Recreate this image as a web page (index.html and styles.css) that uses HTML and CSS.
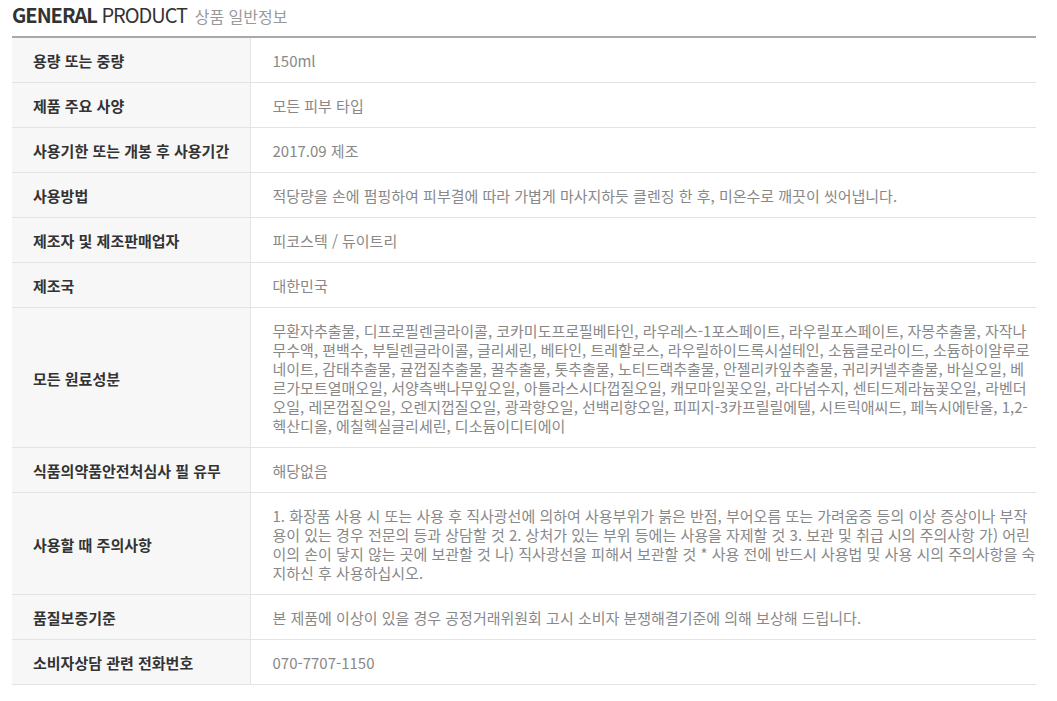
FILE: index.html
```html
<!DOCTYPE html>
<html lang="ko">

<head>
    <meta charset="UTF-8">
    <title>상품 일반정보</title>
    <link rel="stylesheet" href="styles.css">
</head>

<body>
    <div class="info">
        <h3 class="info-title">
            <b>GENERAL</b> PRODUCT <span>상품 일반정보</span>
        </h3>
        <table class="info-table">
            <colgroup>
                <col class="col-label">
                <col>
            </colgroup>
            <tr>
                <th>용량 또는 중량</th>
                <td>150ml</td>
            </tr>
            <tr>
                <th>제품 주요 사양</th>
                <td>모든 피부 타입</td>
            </tr>
            <tr>
                <th>사용기한 또는 개봉 후 사용기간</th>
                <td>2017.09 제조</td>
            </tr>
            <tr>
                <th>사용방법</th>
                <td>적당량을 손에 펌핑하여 피부결에 따라 가볍게 마사지하듯 클렌징 한 후, 미온수로 깨끗이 씻어냅니다.</td>
            </tr>
            <tr>
                <th>제조자 및 제조판매업자</th>
                <td>피코스텍 / 듀이트리</td>
            </tr>
            <tr>
                <th>제조국</th>
                <td>대한민국</td>
            </tr>
            <tr>
                <th>모든 원료성분</th>
                <td>무환자추출물, 디프로필렌글라이콜, 코카미도프로필베타인, 라우레스-1포스페이트, 라우릴포스페이트, 자몽추출물, 자작나무수액, 편백수, 부틸렌글라이콜, 글리세린, 베타인, 트레할로스, 라우릴하이드록시설테인, 소듐클로라이드, 소듐하이알루로네이트, 감태추출물, 귤껍질추출물, 꿀추출물, 톳추출물, 노티드랙추출물, 안젤리카잎추출물, 귀리커넬추출물, 바실오일, 베르가모트열매오일, 서양측백나무잎오일, 아틀라스시다껍질오일, 캐모마일꽃오일, 라다넘수지, 센티드제라늄꽃오일, 라벤더오일, 레몬껍질오일, 오렌지껍질오일, 광곽향오일, 선백리향오일, 피피지-3카프릴릴에텔, 시트릭애씨드, 페녹시에탄올, 1,2-헥산디올, 에칠헥실글리세린, 디소듐이디티에이</td>
            </tr>
            <tr>
                <th>식품의약품안전처심사 필 유무</th>
                <td>해당없음</td>
            </tr>
            <tr>
                <th>사용할 때 주의사항</th>
                <td>1. 화장품 사용 시 또는 사용 후 직사광선에 의하여 사용부위가 붉은 반점, 부어오름 또는 가려움증 등의 이상 증상이나 부작용이 있는 경우 전문의 등과 상담할 것 2. 상처가 있는 부위 등에는 사용을 자제할 것 3. 보관 및 취급 시의 주의사항 가) 어린이의 손이 닿지 않는 곳에 보관할 것 나) 직사광선을 피해서 보관할 것 * 사용 전에 반드시 사용법 및 사용 시의 주의사항을 숙지하신 후 사용하십시오.</td>
            </tr>
            <tr>
                <th>품질보증기준</th>
                <td>본 제품에 이상이 있을 경우 공정거래위원회 고시 소비자 분쟁해결기준에 의해 보상해 드립니다.</td>
            </tr>
            <tr>
                <th>소비자상담 관련 전화번호</th>
                <td>070-7707-1150</td>
            </tr>
        </table>
    </div>
</body>

</html>
```

FILE: styles.css
```css
* {
    margin: 0px;
    padding: 0px;
}

body {
    padding: 0 12px;
    background-color: #fff;
    font-family: "Noto Sans CJK KR", "Noto Sans", sans-serif;
    color: #333;
}

.info {
    width: 1024px;
}

.info-title {
    height: 36px;
    font-size: 20px;
    font-weight: normal;
    line-height: 29px;
    letter-spacing: -1px;
    color: #333;
}

.info-title b {
    font-weight: bold;
}

.info-title span {
    margin-left: 3px;
    font-size: 16px;
    letter-spacing: 0;
    color: #999;
}

.info-table {
    width: 100%;
    border-collapse: collapse;
    border-top: 2px solid #a9a9a9;
    font-size: 15px;
    line-height: 19px;
}

.col-label {
    width: 238px;
}

.info-table th,
.info-table td {
    padding: 13px 0 12px 21px;
    border-bottom: 1px solid #e3e3e3;
    text-align: left;
    vertical-align: middle;
}

.info-table th {
    background-color: #f7f7f7;
    border-right: 1px solid #e3e3e3;
    font-weight: bold;
    color: #333;
}

.info-table td {
    padding-left: 22px;
    color: #888;
    word-break: break-all;
    line-break: anywhere;
}
```
